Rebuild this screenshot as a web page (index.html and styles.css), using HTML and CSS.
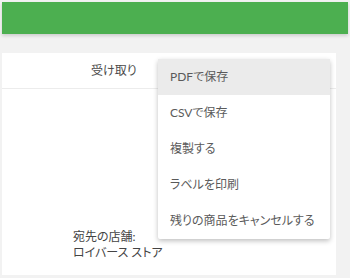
FILE: index.html
```html
<!DOCTYPE html>
<html lang="ja">
<head>
    <meta charset="UTF-8">
    <meta name="viewport" content="width=device-width, initial-scale=1.0">
    <title>受け取り</title>
    <link rel="stylesheet" href="styles.css">
</head>
<body>

<header class="topbar"></header>

<div class="card">
    <div class="card-head">
        <span class="tab">受け取り</span>
    </div>
    <div class="card-body">
        <div class="store">
            <div>宛先の店舗:</div>
            <div>ロイバース ストア</div>
        </div>
    </div>

    <!-- メニュー -->
    <ul class="menu">
        <li class="menu-item active">PDFで保存</li>
        <li class="menu-item">CSVで保存</li>
        <li class="menu-item">複製する</li>
        <li class="menu-item">ラベルを印刷</li>
        <li class="menu-item">残りの商品をキャンセルする</li>
    </ul>
</div>

</body>
</html>
```

FILE: styles.css
```css
body {
    background-color: #f2f2f2;
    color: #333;
    font-family: Lato, "Noto Sans CJK JP", sans-serif;
    font-feature-settings: "palt";
    font-size: 12px;
    margin: 0;
    padding: 2px;
    overflow: hidden;
}
.topbar {
    background-color: #4caf50;
    height: 32px;
    box-shadow: 0 2px 3px rgba(0, 0, 0, 0.15);
}
.card {
    position: relative;
    background-color: #fff;
    margin: 19px 12px 0 0;
    height: 222px;
    display: flex;
    flex-direction: column;
}
.card-head {
    height: 35px;
    border-bottom: 1px solid #ececec;
    display: flex;
    align-items: center;
    padding-left: 89px;
}
.tab {
    color: #4a4a4a;
    margin-top: -2px;
}
.card-body {
    flex: 1;
    display: flex;
    align-items: flex-end;
    padding: 0 0 14px 71px;
}
.store {
    line-height: 16px;
    color: #444;
    white-space: nowrap;
}
.menu {
    position: absolute;
    left: 156px;
    top: 6px;
    width: 172px;
    margin: 0;
    padding: 0;
    list-style: none;
    background-color: #fff;
    border-radius: 2px;
    box-shadow: 0 2px 5px rgba(0, 0, 0, 0.25);
}
.menu-item {
    height: 36px;
    line-height: 36px;
    padding-left: 12px;
    color: #5a5a5a;
    white-space: nowrap;
}
.menu-item.active {
    background-color: #ebebeb;
}
```
